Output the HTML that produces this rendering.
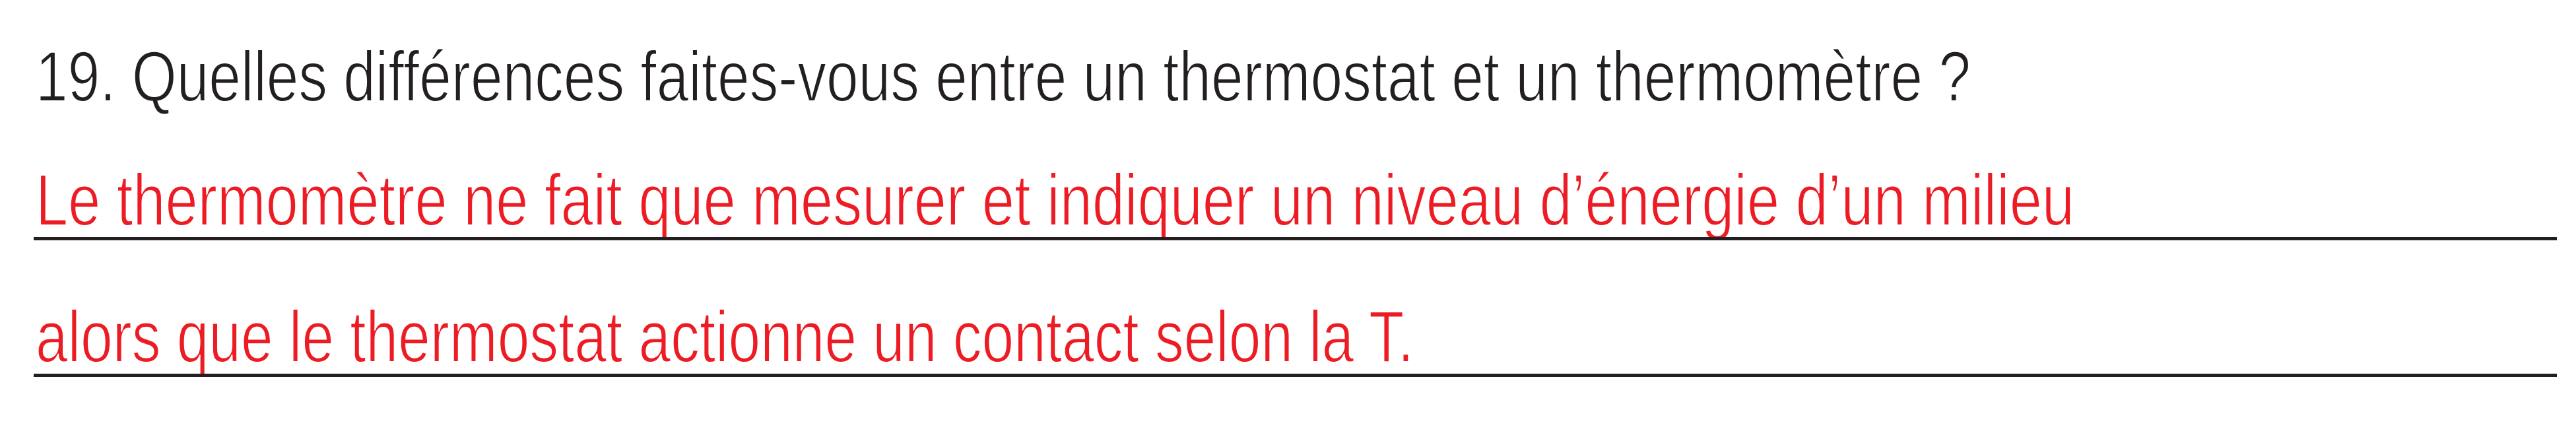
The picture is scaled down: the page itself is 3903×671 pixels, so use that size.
<!DOCTYPE html>
<html><head><meta charset="utf-8"><style>
html,body{margin:0;padding:0;background:#fff;width:3903px;height:671px;overflow:hidden}
svg{display:block}
text{font-family:"Liberation Sans",sans-serif;font-weight:normal;stroke:#fff;stroke-width:2px}
</style></head><body>
<svg width="3903" height="671" viewBox="0 0 3903 671" xmlns="http://www.w3.org/2000/svg">
<text x="54" y="153" font-size="108" fill="#231f20" textLength="2932" lengthAdjust="spacingAndGlyphs">19. Quelles différences faites-vous entre un thermostat et un thermomètre ?</text>
<text x="54" y="341" font-size="110" fill="#ed1c24" textLength="3089" lengthAdjust="spacingAndGlyphs">Le thermomètre ne fait que mesurer et indiquer un niveau d’énergie d’un milieu</text>
<rect x="51" y="359" width="3823" height="5" fill="#231f20"/>
<text x="54" y="548" font-size="110" fill="#ed1c24" textLength="2088" lengthAdjust="spacingAndGlyphs">alors que le thermostat actionne un contact selon la T.</text>
<rect x="51" y="566" width="3823" height="5" fill="#231f20"/>
</svg>
</body></html>
